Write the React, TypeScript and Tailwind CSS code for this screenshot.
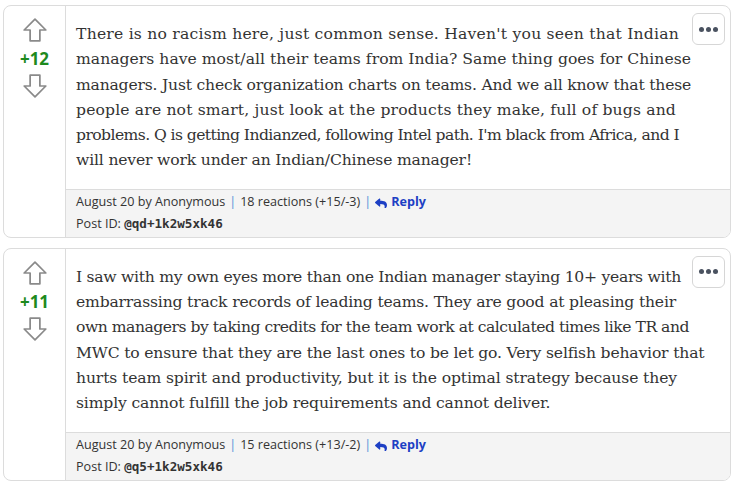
import React, { useLayoutEffect, useRef, useState } from "react";

type Line = [string, number];

type Post = {
  score: number;
  lines: Line[];
  date: string;
  reactions: string;
  postId: string;
};

// each line carries the width it takes in the original layout
const POSTS: Post[] = [
  {
    score: 12,
    lines: [
      ["There is no racism here, just common sense. Haven't you seen that Indian", 603],
      ["managers have most/all their teams from India? Same thing goes for Chinese", 615],
      ["managers. Just check organization charts on teams. And we all know that these", 615],
      ["people are not smart, just look at the products they make, full of bugs and", 600],
      ["problems. Q is getting Indianzed, following Intel path. I'm black from Africa, and I", 603],
      ["will never work under an Indian/Chinese manager!", 396],
    ],
    date: "August 20",
    reactions: "18 reactions (+15/-3)",
    postId: "@qd+1k2w5xk46",
  },
  {
    score: 11,
    lines: [
      ["I saw with my own eyes more than one Indian manager staying 10+ years with", 605],
      ["embarrassing track records of leading teams. They are good at pleasing their", 600],
      ["own managers by taking credits for the team work at calculated times like TR and", 613],
      ["MWC to ensure that they are the last ones to be let go. Very selfish behavior that", 628],
      ["hurts team spirit and productivity, but it is the optimal strategy because they", 601],
      ["simply cannot fulfill the job requirements and cannot deliver.", 474],
    ],
    date: "August 20",
    reactions: "15 reactions (+13/-2)",
    postId: "@q5+1k2w5xk46",
  },
];

function FitLine({ text, width }: { text: string; width: number }) {
  const ref = useRef<HTMLSpanElement>(null);
  const [spacing, setSpacing] = useState(0);

  useLayoutEffect(() => {
    const el = ref.current;
    if (!el) return;
    const natural = el.getBoundingClientRect().width;
    setSpacing((width - natural) / text.length);
  }, [text, width]);

  return (
    <div className="whitespace-nowrap">
      <span ref={ref} style={{ letterSpacing: spacing }}>
        {text}
      </span>
    </div>
  );
}

function Arrow({ down }: { down?: boolean }) {
  return (
    <svg
      width="26"
      height="26"
      viewBox="0 0 24 24"
      className={down ? "rotate-180" : ""}
      fill="none"
      stroke="#8a8a8a"
      strokeWidth="1.6"
      strokeLinejoin="round"
    >
      <path d="M12 2 L22 12 H16.5 V22 H7.5 V12 H2 Z" />
    </svg>
  );
}

function ReplyIcon() {
  return (
    <svg width="12" height="11" viewBox="0 0 512 448" fill="#1d3fc4">
      <path d="M8 206 L184 54 c15-13 40-2 40 18 v80 c161 2 288 34 288 188 0 62-40 124-84 156-14 10-34-3-29-19 46-146-21-185-175-187 v88 c0 21-24 32-40 18 L8 244 c-11-10-11-28 0-38 z" />
    </svg>
  );
}

function Card({ post }: { post: Post }) {
  return (
    <div className="relative flex overflow-hidden rounded-[8px] border border-[#dcdcdc] bg-white">
      <div className="flex w-[62px] shrink-0 flex-col items-center border-r border-[#dcdcdc] pt-[11px]">
        <Arrow />
        <div className="mb-[3px] mt-[5px] font-['Open_Sans',sans-serif] text-[17px] font-bold leading-[22px] text-[#1e8a1e]">
          +{post.score}
        </div>
        <Arrow down />
      </div>
      <div className="flex min-w-0 flex-1 flex-col">
        <div className="flex-1 pl-[10px] pt-[16px] pb-[15px] font-['DejaVu_Serif',serif] text-[15.6px] leading-[25.3px] text-[#333]">
          {post.lines.map(([t, w]) => (
            <FitLine key={t} text={t} width={w} />
          ))}
        </div>
        <div className="flex h-[48px] flex-col justify-center border-t border-[#dcdcdc] bg-[#f4f4f4] pl-[10px] font-['Open_Sans',sans-serif] text-[12.6px] leading-[22px] text-[#333]">
          <div className="flex items-center">
            <span>{post.date} by Anonymous</span>
            <span className="mx-[4px] text-[#4a90d9]">|</span>
            <span>{post.reactions}</span>
            <span className="mx-[4px] text-[#4a90d9]">|</span>
            <span className="flex items-center gap-[4px] font-bold text-[#1d3fc4]">
              <ReplyIcon />
              Reply
            </span>
          </div>
          <div>
            Post ID:{" "}
            <span className="font-['DejaVu_Sans_Mono',monospace] text-[12.6px] font-bold">{post.postId}</span>
          </div>
        </div>
      </div>

      {/* overflow menu */}
      <div className="absolute right-[5px] top-[7px] flex h-[32px] w-[33px] items-center justify-center rounded-[6px] border border-[#d6d6d6] bg-white">
        <span className="flex gap-[2px]">
          <span className="size-[5px] rounded-full bg-[#4a5260]" />
          <span className="size-[5px] rounded-full bg-[#4a5260]" />
          <span className="size-[5px] rounded-full bg-[#4a5260]" />
        </span>
      </div>
    </div>
  );
}

export default function App() {
  return (
    <div className="flex w-[734px] flex-col gap-[10px] bg-white pl-[3px] pr-[3px] pt-[5px]">
      {POSTS.map((p) => (
        <Card key={p.postId} post={p} />
      ))}
    </div>
  );
}
